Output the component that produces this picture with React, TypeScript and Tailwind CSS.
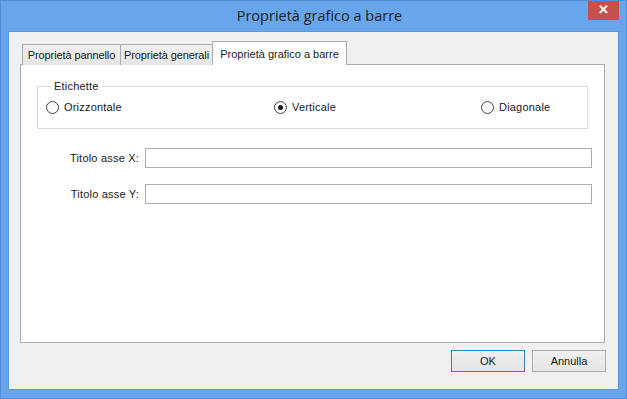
import React from "react";

const tabs = ["Proprietà pannello", "Proprietà generali", "Proprietà grafico a barre"];

function Radio({ label, checked }: { label: string; checked?: boolean }) {
  return (
    <label className="flex items-center gap-[5px]">
      <span className="w-[13px] h-[13px] rounded-full border border-[#444] bg-gradient-to-b from-[#f4f4f4] to-white flex items-center justify-center">
        {checked && <span className="w-[5px] h-[5px] rounded-full bg-[#1a1a1a]" />}
      </span>
      <span>{label}</span>
    </label>
  );
}

function Field({ label }: { label: string }) {
  return (
    <div className="flex items-center h-[20px]">
      <span className="w-[118px] text-right">{label}</span>
      <div className="ml-[6px] flex-1 h-[20px] border border-[#abadb3] bg-white" />
    </div>
  );
}

export default function App() {
  return (
    <div className="w-[627px] h-[399px] bg-[#67a5ec] border border-[#4f8edb] flex flex-col font-['Liberation_Sans',Arial,sans-serif] text-[11px] text-[#1a1a1a] overflow-hidden">
      {/* TITLE BAR */}
      <div className="relative h-[30px] flex items-center justify-center">
        <span className="font-['Open_Sans',sans-serif] text-[14.5px] text-[#1e1e1e] ml-[12px] -mt-[1px]">
          Proprietà grafico a barre
        </span>
        <div className="absolute right-[7px] top-[-1px] w-[31px] h-[20px] bg-[#c7504f] flex items-center justify-center text-white text-[13px] font-bold">
          ✕
        </div>
      </div>

      {/* BODY */}
      <div className="flex-1 mx-[7px] mb-[8px] bg-[#f0f0f0] border border-[#5a97e0] flex flex-col pt-[9px] pl-[11px] pr-[13px] pb-[17px]">
        {/* Tabs */}
        <div className="flex items-end h-[24px] -mb-[1px] ml-[2px] relative z-10">
          <div className="w-[99px] h-[21px] border border-[#acacac] border-b-0 bg-gradient-to-b from-[#f0f0f0] to-[#e5e5e5] flex items-center justify-center tracking-[-0.1px]">
            {tabs[0]}
          </div>
          <div className="w-[92px] h-[21px] border border-[#acacac] border-b-0 border-l-0 bg-gradient-to-b from-[#f0f0f0] to-[#e5e5e5] flex items-center justify-center tracking-[-0.1px]">
            {tabs[1]}
          </div>
          <div className="w-[135px] h-[24px] border border-[#acacac] border-b-0 bg-white -ml-[1px] flex items-start justify-center pt-[4px]">
            {tabs[2]}
          </div>
        </div>

        {/* Panel */}
        <div className="flex-1 bg-white border border-[#acacac] flex flex-col pt-[15px] pl-[16px] pr-[16px] tracking-[0.2px]">
          <fieldset className="border border-[#dcdcdc] pl-[8px] pt-[8px] pb-[14px]">
            <legend className="ml-[6px] px-[2px] leading-[13px]">Etichette</legend>
            <div className="flex h-[13px] items-center">
              <div className="w-[228px]"><Radio label="Orizzontale" /></div>
              <div className="w-[207px]"><Radio label="Verticale" checked /></div>
              <Radio label="Diagonale" />
            </div>
          </fieldset>

          <div className="flex flex-col gap-[16px] mt-[19px] -ml-[16px] -mr-[4px]">
            <Field label="Titolo asse X:" />
            <Field label="Titolo asse Y:" />
          </div>
        </div>

        {/* Buttons */}
        <div className="flex justify-end gap-[7px] mt-[7px] -mr-[1px]">
          <button className="w-[74px] h-[22px] border border-[#3c7fb1] bg-gradient-to-b from-[#f0f0f0] to-[#e5e5e5] text-[11px]">
            OK
          </button>
          <button className="w-[74px] h-[22px] border border-[#acacac] bg-gradient-to-b from-[#f0f0f0] to-[#e5e5e5] text-[11px]">
            Annulla
          </button>
        </div>
      </div>
    </div>
  );
}
